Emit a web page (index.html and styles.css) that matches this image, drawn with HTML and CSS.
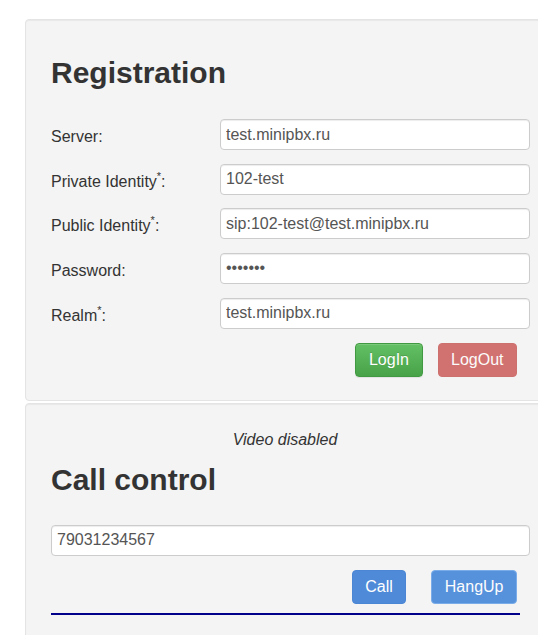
FILE: index.html
```html
<!DOCTYPE html>
<html lang="en">
<head>
<meta charset="utf-8">
<title>Registration</title>
<link rel="stylesheet" href="styles.css">
</head>
<body>
<div class="page">
  <section class="well reg">
    <h2 class="title">Registration</h2>
    <div class="form">
      <label class="lbl">Server:</label>
      <input class="field" type="text" value="test.minipbx.ru">
      <label class="lbl">Private Identity<sup>*</sup>:</label>
      <input class="field" type="text" value="102-test">
      <label class="lbl">Public Identity<sup>*</sup>:</label>
      <input class="field" type="text" value="sip:102-test@test.minipbx.ru">
      <label class="lbl">Password:</label>
      <input class="field" type="password" value="1234567">
      <label class="lbl">Realm<sup>*</sup>:</label>
      <input class="field" type="text" value="test.minipbx.ru">
    </div>
    <div class="actions reg-actions">
      <button class="btn btn-success" type="button">LogIn</button>
      <button class="btn btn-danger" type="button" disabled>LogOut</button>
    </div>
  </section>
  <section class="well call">
    <div class="video">Video disabled</div>
    <h2 class="title">Call control</h2>
    <input class="field number" type="text" value="79031234567">
    <div class="actions call-actions">
      <button class="btn btn-primary" type="button">Call</button>
      <button class="btn btn-primary btn-off" type="button" disabled>HangUp</button>
    </div>
    <div class="line"></div>
  </section>
</div>
</body>
</html>
```

FILE: styles.css
```css
html, body {
  margin: 0;
  padding: 0;
  overflow: hidden;
  background: #ffffff;
}

body {
  font-family: "Liberation Sans", Arial, sans-serif;
  font-size: 16px;
  color: #333333;
}

.page {
  padding-top: 19px;
  padding-left: 25px;
}

.well {
  box-sizing: border-box;
  width: 540px;
  background: #f4f4f4;
  border: 1px solid #e4e4e4;
  border-radius: 4px;
  box-shadow: inset 0 1px 1px rgba(0, 0, 0, 0.05);
  padding: 0 34px 0 25px;
}

.reg {
  padding-top: 36px;
  padding-bottom: 23px;
}

.call {
  margin-top: 2px;
  padding-top: 24px;
  padding-bottom: 30px;
}

.title {
  margin: 0 0 30px 0;
  font-size: 30px;
  line-height: 33px;
  font-weight: bold;
  color: #333333;
}

.call .title {
  margin-top: 12px;
  margin-bottom: 29px;
}

.form {
  display: grid;
  grid-template-columns: 169px 310px;
  row-gap: 13.67px;
}

.lbl {
  padding-top: 9px;
  line-height: 18px;
  white-space: nowrap;
}

.lbl sup {
  font-size: 11px;
  line-height: 0;
  vertical-align: 0;
  position: relative;
  top: -7px;
}

.field {
  box-sizing: border-box;
  height: 31px;
  margin: 0;
  padding: 0 5px;
  border: 1px solid #cccccc;
  border-radius: 4px;
  background: #ffffff;
  font-family: "Liberation Sans", Arial, sans-serif;
  font-size: 16px;
  color: #555555;
  box-shadow: inset 0 1px 1px rgba(0, 0, 0, 0.075);
  outline: none;
}

.number {
  display: block;
  width: 479px;
}

.actions {
  display: flex;
  justify-content: flex-end;
  margin-top: 14.33px;
  margin-right: 13px;
}

.reg-actions {
  gap: 15px;
}

.call-actions {
  margin-top: 14px;
  gap: 25px;
}

.btn {
  box-sizing: border-box;
  height: 34px;
  padding: 0 12.5px;
  border: 1px solid transparent;
  border-radius: 4px;
  font-family: "Liberation Sans", Arial, sans-serif;
  font-size: 16px;
  color: #ffffff;
  cursor: pointer;
}

.btn-success {
  background: linear-gradient(to bottom, #64c064 0%, #48a348 100%);
  border-color: #419a41;
  box-shadow: inset 0 1px 0 rgba(255, 255, 255, 0.15), 0 1px 1px rgba(0, 0, 0, 0.075);
  text-shadow: 0 -1px 0 rgba(0, 0, 0, 0.15);
}

.btn-danger {
  background: #c12e2a;
  border-color: #b92c28;
  opacity: 0.65;
  cursor: default;
}

.btn-primary {
  background: #4f8ad8;
  border-color: #4b86d4;
}

.btn-off {
  background: #2f79d6;
  border-color: #5b9be6;
  opacity: 0.8;
  cursor: default;
}

.video {
  margin: 0 0 0 -11px;
  text-align: center;
  font-style: italic;
  font-size: 16px;
  line-height: 23px;
  color: #333333;
}

.line {
  margin-top: 9px;
  width: 469px;
  height: 2px;
  background: #00008b;
}
```
